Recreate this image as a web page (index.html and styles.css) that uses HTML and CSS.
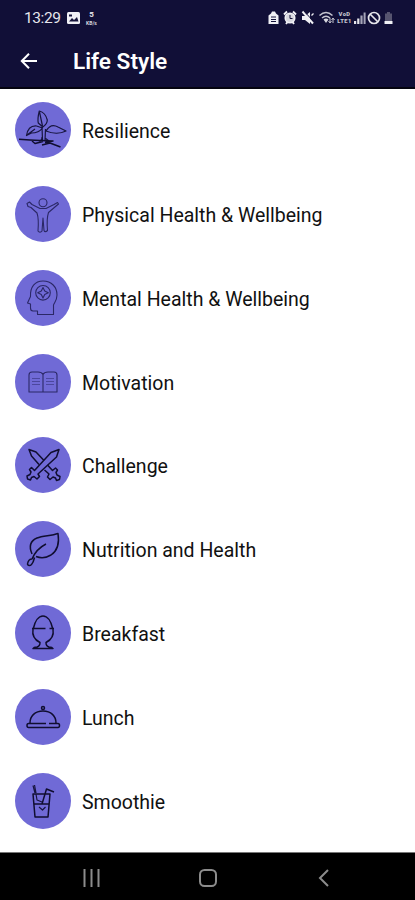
FILE: index.html
```html
<!DOCTYPE html>
<html lang="en">
<head>
    <meta charset="UTF-8">
    <meta name="viewport" content="width=device-width, initial-scale=1.0">
    <title>Life Style</title>
    <link rel="stylesheet" href="styles.css">
</head>
<body>

    <header class="top">
        <div class="status-bar">
            <span class="time">13:29</span>
            <svg class="picture-icon" width="13" height="12" viewBox="0 0 13 12">
                <rect width="13" height="12" rx="1.5" fill="#f0f0f5"/>
                <path d="M2 9.5L5 6l2 2 3-3 1.5 4.5zM2 2.500h3v2H2z" fill="#15133a"/>
            </svg>
            <div class="speed"><b>5</b><span>KB/s</span></div>
            <div class="status-right">
                <svg width="125" height="16" viewBox="0 0 125 16">
                    <!-- battery saver -->
                    <path d="M.5 5.500L3 3.500 4 1.500h3l1 2 2.500 2V14H.5z" fill="#f0f0f5"/>
                    <path d="M3 7h5M3 11.500h5M3 9.500h5" stroke="#15133a" fill="none"/>
                    <!-- alarm -->
                    <circle cx="22" cy="8" r="4.800" fill="#d8d8df" stroke="#f0f0f5" stroke-width="1.500"/>
                    <path d="M16 4.500l3-3M28 4.500l-3-3M18 14l1.500-2M26 14l-1.500-2" stroke="#f0f0f5" stroke-width="1.900"/>
                    <path d="M22 5v3.500h2.500" stroke="#15133a" fill="none"/>
                    <!-- mute -->
                    <path d="M34 6h3l5-4v12l-5-4h-3z" fill="#f0f0f5"/>
                    <path d="M34.500 1.500l10.500 12" stroke="#f0f0f5" stroke-width="2"/>
                    <path d="M36 1l10 11" stroke="#15133a"/>
                    <path d="M43.500 5.500l2-2" stroke="#f0f0f5" stroke-width="1.300"/>
                    <!-- wifi -->
                    <path d="M51.500 5.500q6.500-6 13 0M54 8q4-3.500 8 0" stroke="#c5c5d0" stroke-width="1.500" fill="none"/>
                    <path d="M55.500 9.500q2.500-2 5 0L58 13z" fill="#d8d8df"/>
                    <path d="M62 8v4.500m-1.500-1.500l1.500 2 1.500-2M65 13V8.500m-1.500 1.500L65 8l1.500 2" stroke="#c5c5d0" fill="none"/>
                    <!-- signal -->
                    <path d="M86 11h2.200v3H86zM89.200 8.500h2.200V14h-2.200z" fill="#e5e5ea"/>
                    <path d="M92.400 5.500h2.200V14h-2.200zM95.600 2.500h2V14h-2z" fill="#a5a4b7"/>
                    <circle cx="106" cy="8" r="5.500" fill="none" stroke="#e5e5ea" stroke-width="1.700"/>
                    <path d="M102 4l8 8" stroke="#e5e5ea" stroke-width="1.700"/>
                    <!-- battery -->
                    <path d="M117 3.500h2V2h3v1.500h2V11h-7z" fill="#56546f"/>
                    <path d="M116.500 11h8v3h-8z" fill="#f0f0f5"/>
                </svg>
                <div class="volte"><span>VoD</span><span>LTE1</span></div>
            </div>
        </div>
        <div class="app-bar">
            <svg class="back" width="18" height="18" viewBox="0 0 18 18">
                <path d="M17 9H2M9 1.800L1.800 9 9 16.200"/>
            </svg>
            <h1>Life Style</h1>
        </div>
    </header>

    <ul class="list">
        <li class="item">
            <svg class="icon" viewBox="0 0 56 56">
                <path d="M24.300 9c-1 4-2 8-1 12l4.500 4c3-2 4.500-5 4.500-7-1-4-4-8-8-9zM24.500 10l3 14M11.500 33.500c1-6 4-10 10-9.500l6 2c-3 4-7 5-11 5zM12 33l8-6M31 29c3-5 7-7 12-4l8 4c-5 2.500-13 3-20 0zM27 25l.5 13M30.500 27L30 39M24 39c2 0 3-2 3-4M34 39l-4-3"/>
                <path class="bold" d="M4 37.300l11 .7 10 .5 13 .5-8 1.500M17 39l3 2.500 8-2M27 43l8-2 10.500 4"/>
            </svg>
            <span>Resilience</span>
        </li>
        <li class="item">
            <svg class="icon thin" viewBox="0 0 56 56">
                <circle cx="28" cy="16.800" r="4"/>
                <path d="M12 17.500l2.500-1.500 2.500 2.500 8 4h6l8-4 3.500-2 1 1.500-3 2.500-7 6c-2 6-1.500 12-1 18-1.500 1.500-3 1.500-3.500 0L28 32l-1 13c-1 1.500-3 1.500-4 0 .5-6 1-12-1-18l-6-5.500-3-1z"/>
            </svg>
            <span>Physical Health &amp; Wellbeing</span>
        </li>
        <li class="item">
            <svg class="icon thin" viewBox="0 0 56 56">
                <path d="M22.500 44.500V41H18c-2 0-2.500-1-2.500-3v-4l-3-1 3-6.500C15 17 20 11 28 11c8.500 0 14 6 14 14 0 5-2 7-3.500 10v9.500z"/>
                <circle cx="28" cy="22.800" r="7.300"/>
                <path d="M28 17.500l1.700 3.600 3.600 1.700-3.600 1.700L28 28.100l-1.700-3.600-3.600-1.700 3.600-1.700z"/>
            </svg>
            <span>Mental Health &amp; Wellbeing</span>
        </li>
        <li class="item">
            <svg class="icon thin" viewBox="0 0 56 56">
                <path d="M28 20.500c-1-2-3-2.500-5-2.500h-6c-2 0-3 1-3 3v17h14zM28 20.500c1-2 3-2.500 5-2.500h6c2 0 3 1 3 3v17H28"/>
                <path class="faint" d="M17 24.500h8M17 27.500h8M17 30.500h8M31 24.500h8M31 27.500h8M31 30.500h8"/>
            </svg>
            <span>Motivation</span>
        </li>
        <li class="item">
            <svg class="icon bold" viewBox="0 0 56 56">
                <path d="M19.500 33.500L36 15.500l8-3-2.500 7.500L23 37l1.500 2.500-2.500 2.500-3-2.500-2.500 1-1 2.500-3-1-.5-3 3-1.500 1-2.500-1.500-2.500 2-2z"/>
                <path d="M24 27.500l-7.500-8.500-2.500-6.500 7 2.500 8 8.500M32.500 28l5 5.500 3-2.500 2 2-1.500 2.500 1 2.500 3 1.500-.5 3-3 1-1-2.500-2.500-1-3 2.500-2.500-2.500L34 37l-4.500-4"/>
            </svg>
            <span>Challenge</span>
        </li>
        <li class="item">
            <svg class="icon bold" viewBox="0 0 56 56">
                <path d="M17 33c-3-7-2-13 5-16 6-2.500 14-2 21-4.500C44.500 22 42 30 36 34c-5 3-11 3-15 1.500M31 23c-6 3-11 8-14 15-2 0-4 2-4.500 5 .5 2 2.500 2 4 .5 2-2 2.500-5 3-7"/>
            </svg>
            <span>Nutrition and Health</span>
        </li>
        <li class="item">
            <svg class="icon bold" viewBox="0 0 56 56">
                <path d="M18.500 23C20 16.500 23.500 11 28 11s8 5.500 9.500 12M17 23.500h13.500M34.500 23.500H39M18 24c-1 6 2 11 7 13.500 0 3-1 4-3 4.500-2 0-3.500.5-4 1.500h20c-.5-1-2-1.500-4-1.500-2-.5-3-1.500-3-4.500 5-2.500 8-7.500 7-13.500"/>
            </svg>
            <span>Breakfast</span>
        </li>
        <li class="item">
            <svg class="icon bold" viewBox="0 0 56 56">
                <path d="M15 34c0-7 5-12 13-12s13 5 13 12M34 34.500h9c2 0 2 4 0 4H13.500c-2 0-2-4 0-4H31"/>
                <circle cx="28" cy="19" r="1.500"/>
            </svg>
            <span>Lunch</span>
        </li>
        <li class="item">
            <svg class="icon" viewBox="0 0 56 56">
                <path class="bold" d="M18 21h17l-2 23H20zM19 31h15M27 31l4.500-15 7.500 3"/>
                <path d="M18 12.500l2 7.500M19.500 12l1.500 8M21 21l1 6 5 2M24 34l3.500 3 3-3"/>
            </svg>
            <span>Smoothie</span>
        </li>
    </ul>

    <footer class="nav-bar">
        <svg width="18" height="18" viewBox="0 0 18 18"><path d="M1.500 0v18M8.500 0v18M15.500 0v18"/></svg>
        <svg width="18" height="18" viewBox="0 0 18 18"><rect x="1" y="1" width="16" height="16" rx="4.500"/></svg>
        <svg width="18" height="18" viewBox="0 0 18 18"><path d="M13 1L5 9l8 8"/></svg>
    </footer>

</body>
</html>
```
FILE: styles.css
```css
* {
    box-sizing: border-box;
}
body {
    margin: 0;
    height: 900px;
    display: flex;
    flex-direction: column;
    overflow: hidden;
    font-family: Roboto, sans-serif;
    background-color: #fff;
}
.top {
    flex: none;
    height: 89px;
    background-color: #110f37;
    border-bottom: 2px solid #05040f;
    color: #fff;
}
.status-bar {
    height: 34px;
    padding: 1px 22px 0 24px;
    display: flex;
    align-items: center;
}
.time {
    width: 37px;
    font-size: 15.5px;
    letter-spacing: -0.4px;
    color: #e6e6ec;
}
.picture-icon {
    margin-left: 6px;
}
.speed {
    margin-left: 5px;
    width: 13px;
    display: flex;
    flex-direction: column;
    align-items: center;
    font-size: 5px;
    font-weight: bold;
    line-height: 6px;
    color: #d8d8df;
}
.speed b {
    font-size: 8px;
    line-height: 10px;
}
.status-right {
    position: relative;
    margin-left: auto;
    height: 16px;
}
.volte {
    position: absolute;
    left: 68px;
    top: 1px;
    width: 17px;
    display: flex;
    flex-direction: column;
    align-items: center;
    font-size: 5.8px;
    font-weight: 900;
    letter-spacing: 0.4px;
    line-height: 7px;
    color: #c5c5d0;
}
.app-bar {
    height: 53px;
    padding-left: 20px;
    display: flex;
    align-items: center;
}
.back {
    fill: none;
    stroke: #fff;
    stroke-width: 2;
}
.app-bar h1 {
    margin: 2px 0 0 35px;
    font-size: 22.6px;
    font-weight: 600;
}
.list {
    flex: 1;
    min-height: 0;
    margin: 0;
    padding: 13px 0 0 15px;
    list-style: none;
}
.item {
    height: 83.85px;
    display: flex;
    align-items: flex-start;
    font-size: 19.5px;
    color: #111;
}
.item span {
    margin-left: 11px;
    line-height: 59px;
}
.icon {
    width: 56px;
    height: 56px;
    border-radius: 50%;
    background-color: #706ad6;
    fill: none;
    stroke: #17153f;
    stroke-width: 1.2;
    stroke-linejoin: round;
}
.icon.thin {
    stroke: #2b2867;
    stroke-width: 1.1;
}
.bold,
.icon.bold {
    stroke: #100e30;
    stroke-width: 1.5;
}
.faint {
    stroke: #4c479e;
}
.nav-bar {
    flex: none;
    height: 48px;
    padding: 2px 82px 0 83px;
    border-top: 1px solid #777;
    background-color: #000;
    display: flex;
    align-items: center;
    justify-content: space-between;
}
.nav-bar svg {
    fill: none;
    stroke: #8c8c8c;
    stroke-width: 2;
}
```
